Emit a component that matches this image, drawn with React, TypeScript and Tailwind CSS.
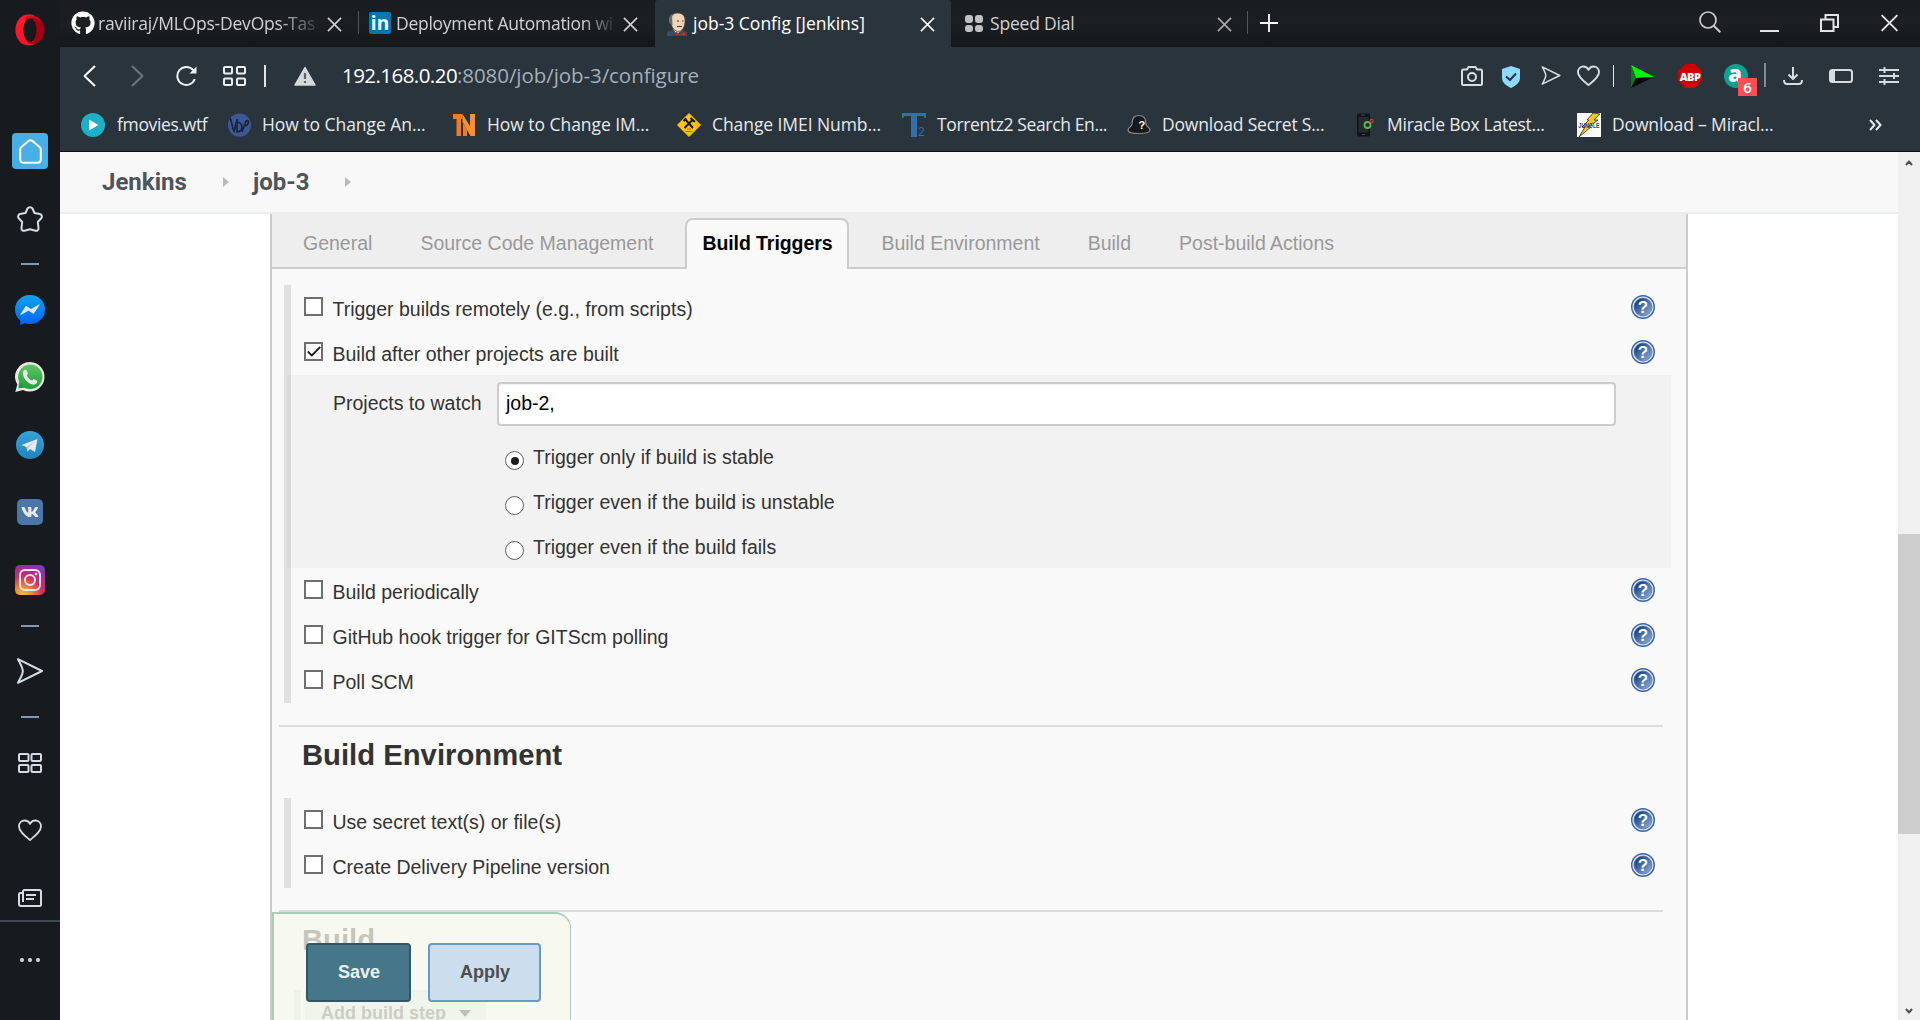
import type { ReactNode } from 'react';
import { FaGithub, FaVk } from 'react-icons/fa';

type IconProps = { className: string; viewBox: string; children: ReactNode };

function Icon({ className, viewBox, children }: IconProps) {
  return (
    <svg
      className={`block shrink-0 ${className}`}
      viewBox={viewBox}
      fill="none"
      stroke="currentColor"
      strokeWidth="2"
      strokeLinejoin="round"
    >
      {children}
    </svg>
  );
}

const HEART = 'M12 21C7 17 1 12.500 1 7.500C1 4 3.500 1.500 6.700 1.500C9 1.500 11 2.800 12 5C13 2.800 15 1.500 17.300 1.500C20.500 1.500 23 4 23 7.500C23 12.500 17 17 12 21Z';

function Grid({ className }: { className: string }) {
  return (
    <Icon className={className} viewBox="0 0 24 20">
      <rect x="1" y="1" width="9.500" height="7" rx="1" />
      <rect x="13.500" y="1" width="9.500" height="7" rx="1" />
      <rect x="1" y="12" width="9.500" height="7" rx="1" />
      <rect x="13.500" y="12" width="9.500" height="7" rx="1" />
    </Icon>
  );
}

function Send({ className }: { className: string }) {
  return (
    <Icon className={className} viewBox="0 0 26 26">
      <path d="M1 1.200L25 13L1 24.800C3.500 20 5.800 16.500 5.800 13C5.800 9.500 3.500 6 1 1.200Z" />
    </Icon>
  );
}

function Close({ className }: { className: string }) {
  return (
    <Icon className={className} viewBox="0 0 16 16">
      <path d="M1 1L15 15M15 1L1 15" strokeWidth="1.700" />
    </Icon>
  );
}

function Dash({ className }: { className: string }) {
  return <div className={`h-0.5 w-[18px] shrink-0 bg-[#8698a8] ${className}`} />;
}

function Sidebar() {
  return (
    <aside className="flex h-full w-[60px] shrink-0 flex-col items-center bg-[#171b1f] text-[#d3dde3]">
      <svg className="mt-[14px] h-8 w-[30px] shrink-0" viewBox="0 0 30 32">
        <defs>
          <linearGradient id="opera" x1="0" y1="0" x2="0" y2="1">
            <stop offset="0" stopColor="#ff1b2d" />
            <stop offset="1" stopColor="#f01528" />
          </linearGradient>
        </defs>
        <ellipse cx="15" cy="16" rx="14.500" ry="15" fill="#a70014" />
        <path d="M20 2C8 -3 0.500 6 0.500 16S8 35 20 30C12 31 8.500 24 8.500 16S12 2 20 2Z" fill="url(#opera)" />
        <path d="M10 4C15 0 23 2 26 7C20 3 14 3 11 8Z" fill="#d50b20" />
        <ellipse cx="15" cy="16" rx="6.500" ry="11.500" fill="#171b1f" />
      </svg>
      <div className="mt-[87px] flex h-9 w-9 shrink-0 items-center justify-center rounded-[4px] bg-[#46b0e6] text-white">
        <Icon className="h-[25px] w-[23px]" viewBox="0 0 23 25">
          <path d="M1.200 10.500C1.200 9.500 1.500 9 2.200 8.200L9.500 2C10.800 1 12.200 1 13.500 2L20.800 8.200C21.500 9 21.800 9.500 21.800 10.500V20.500C21.800 22.500 20.500 23.800 18.500 23.800H4.500C2.500 23.800 1.200 22.500 1.200 20.500Z" />
        </Icon>
      </div>
      <Icon className="mt-[37px] h-[26px] w-[26px]" viewBox="0 0 26 26">
        <path d="M10.500 2.500C11.500 0.800 14.500 0.800 15.500 2.500L17.500 7L23 8C25 8.600 25.600 11 24 12.500L20.800 16L21.500 22C21.600 24.500 20 25 18.500 24.700L13 23.200L7.500 24.700C6 25 4.400 24.500 4.500 22L5.200 16L2 12.500C0.400 11 1 8.600 3 8L8.500 7Z" />
      </Icon>
      <Dash className="mt-[31px]" />
      <svg className="mt-[30px] h-[30px] w-[30px] shrink-0" viewBox="0 0 30 30">
        <defs>
          <linearGradient id="messenger" x1="0" y1="0" x2="0" y2="1">
            <stop offset="0" stopColor="#0aa5ef" />
            <stop offset="1" stopColor="#0663f2" />
          </linearGradient>
        </defs>
        <path d="M15 0C23.500 0 30 6.200 30 14.500S23.500 29 15 29C13 29 11.500 28.700 10 28L5.300 30V25.500C2 23 0 19 0 14.500C0 6.200 6.500 0 15 0Z" fill="url(#messenger)" />
        <path d="M5.800 19.500L11 11.200L16 14.500L24.200 9.800L18.500 18.500L13.500 15.200Z" fill="#e9e9e9" stroke="#e9e9e9" strokeWidth="0.800" strokeLinejoin="round" />
      </svg>
      <svg className="mt-[37px] h-[30px] w-[30px] shrink-0" viewBox="0 0 30 30">
        <defs>
          <linearGradient id="whatsapp" x1="0" y1="0" x2="0" y2="1">
            <stop offset="0" stopColor="#5fc467" />
            <stop offset="1" stopColor="#20a038" />
          </linearGradient>
        </defs>
        <path d="M15 0A14.800 14.800 0 1 1 8 28L0.300 30L2.300 22.500A14.800 14.800 0 0 1 15 0Z" fill="#e8e8e8" />
        <circle cx="15.300" cy="14.800" r="12.200" fill="url(#whatsapp)" />
        <path d="M4 20L3.500 26.500L11 25.500Z" fill="#20a038" />
        <path d="M8 11C8 9 9 8 10 7.700C11 7.500 11.500 8 11.800 8.800L12.800 11.300C13 12 12.300 12.800 11.700 13.500C13 16 14.500 17.500 17 18.600C17.800 17.600 18.400 16.900 19.200 17.200L21.800 18.500C22.500 18.900 22.300 20 22 20.700C21 22.500 18.500 22.800 16.500 22.200C12 20.700 8 16 8 11Z" fill="#e8e8e8" />
      </svg>
      <svg className="mt-[39px] h-7 w-7 shrink-0" viewBox="0 0 28 28">
        <defs>
          <linearGradient id="telegram" x1="0" y1="0" x2="0" y2="1">
            <stop offset="0" stopColor="#38a3d5" />
            <stop offset="1" stopColor="#1d84be" />
          </linearGradient>
        </defs>
        <circle cx="14" cy="14" r="14" fill="url(#telegram)" />
        <path d="M5.500 14L21.500 8L19 21L14 18L11.500 20.500L10.500 16Z" fill="#e6eaed" />
        <path d="M10.500 16L18.500 10.500L12.500 16.800L11.500 20.500Z" fill="#b9cbd8" />
      </svg>
      <div className="mt-10 flex h-[26px] w-[26px] shrink-0 items-center justify-center rounded-[5px] bg-[#4b76a8] text-[#e6e9ec]">
        <FaVk className="h-5 w-[18px]" />
      </div>
      <div className="mt-10 flex h-[30px] w-[30px] shrink-0 items-center justify-center rounded-[5px] bg-[radial-gradient(circle_at_25%_105%,#f3c25f_0%,#ee8a35_25%,#cf2f63_52%,#9f2e9c_75%,#5a49c0_100%)] text-[#f0e6ec]">
        <Icon className="h-[22px] w-[22px]" viewBox="0 0 22 22">
          <rect x="1" y="1" width="20" height="20" rx="5" />
          <circle cx="11" cy="11" r="5" />
          <circle cx="17" cy="5" r="1.300" fill="currentColor" stroke="none" />
        </Icon>
      </div>
      <Dash className="mt-[30px]" />
      <Send className="mt-[31px] h-[26px] w-[26px]" />
      <Dash className="mt-8" />
      <Grid className="mt-[35px] h-5 w-6" />
      <Icon className="mt-[46px] h-[22px] w-6" viewBox="0 0 24 22">
        <path d={HEART} strokeWidth="1.800" />
      </Icon>
      <Icon className="mt-12 h-[18px] w-6" viewBox="0 0 24 18">
        <path d="M5 13V2.500C5 1.500 5.500 1 6.500 1H21.500C22.500 1 23 1.500 23 2.500V15.500C23 16.500 22.500 17 21.500 17H3C1.800 17 1 16.200 1 15V5.500C1 4.500 1.500 4 2.500 4H4M8 6H18M8 10H16" />
      </Icon>
      <div className="mt-[13px] h-0.5 w-full shrink-0 bg-[#3f4951]" />
      <div className="mt-9 flex gap-1">
        <span className="h-1 w-1 rounded-full bg-[#d3dde3]" />
        <span className="h-1 w-1 rounded-full bg-[#d3dde3]" />
        <span className="h-1 w-1 rounded-full bg-[#d3dde3]" />
      </div>
    </aside>
  );
}

function JenkinsFace() {
  return (
    <svg className="h-6 w-[21px] shrink-0" viewBox="0 0 21 24">
      <path d="M0 24V20L6 18H14L20 20V24Z" fill="#335061" />
      <path d="M6 17L10 22L15 18Z" fill="#f0efe9" />
      <path d="M4 11C3 4 6 1 10.500 1C16 1 18.500 4.500 18 10C17.800 15 15 19.500 11.500 19.500C8 19.500 5 16.500 4 11Z" fill="#efd3b5" stroke="#55423a" strokeWidth="0.800" />
      <path d="M3 12C0.500 8 2 3 6 1.500C4.500 5 5.500 8 5.500 13Z" fill="#6d6b6d" />
      <path d="M10 9H12M15 9H16.500M10 14.500H15" stroke="#4b3a33" strokeWidth="1.200" />
      <path d="M9 20L13 22L9 24ZM18 20L13 22L18 24Z" fill="#d33833" stroke="#8d1f1f" strokeWidth="0.500" />
    </svg>
  );
}

function TabStrip() {
  return (
    <div className="flex h-[47px] shrink-0 bg-linear-to-b from-[#1a1d20] via-[#1c1f22] to-[#15181b] text-[17.5px] leading-[46px] text-[#cfd1d3]">
      <div className="flex w-[298px] pl-[11px]">
        <FaGithub className="mt-[11px] h-6 w-6 shrink-0 text-white" />
        <span className="ml-[3px] w-[218px] overflow-hidden whitespace-nowrap tracking-[-0.22px] [mask-image:linear-gradient(to_right,black_82%,transparent_104%)]">
          raviiraj/MLOps-DevOps-Tas
        </span>
        <Close className="ml-[11px] mt-[17px] h-[15px] w-[15px]" />
      </div>
      <div className="mt-[11px] h-[23px] w-px bg-[#54575a]" />
      <div className="flex w-[296px] pl-[10px]">
        <span className="mt-3 flex h-[22px] w-[22px] shrink-0 items-center justify-center rounded-[2px] bg-[#0077b5] text-[19px] font-bold leading-none text-white">
          in
        </span>
        <span className="ml-[5px] w-[217px] overflow-hidden whitespace-nowrap tracking-[-0.27px] [mask-image:linear-gradient(to_right,black_86%,transparent_102%)]">
          Deployment Automation wi
        </span>
        <Close className="ml-[10px] mt-[17px] h-[15px] w-[15px]" />
      </div>
      <div className="flex w-[296px] rounded-t-[3px] bg-[#2a343d] pl-[12px] text-white">
        <div className="mt-3">
          <JenkinsFace />
        </div>
        <span className="ml-[5px] w-[227px] whitespace-nowrap">job-3 Config [Jenkins]</span>
        <Close className="mt-[17px] h-[15px] w-[15px]" />
      </div>
      <div className="flex w-[296px] pl-[14px]">
        <div className="mt-[15px] grid h-[17px] w-[18px] shrink-0 grid-cols-2 gap-[2px]">
          <span className="rounded-[3px] bg-[#bfc1c3]" />
          <span className="rounded-[3px] bg-[#bfc1c3]" />
          <span className="rounded-[3px] bg-[#bfc1c3]" />
          <span className="rounded-[3px] bg-[#bfc1c3]" />
        </div>
        <span className="ml-[7px] w-[227px] whitespace-nowrap tracking-[-0.19px]">Speed Dial</span>
        <Close className="mt-[17px] h-[15px] w-[15px] text-[#a9abad]" />
      </div>
      <div className="mt-[11px] h-[23px] w-px bg-[#54575a]" />
      <Icon className="ml-3 mt-[14px] h-[18px] w-[18px] text-white" viewBox="0 0 18 18">
        <path d="M9 0V18M0 9H18" strokeWidth="1.800" />
      </Icon>
      <div className="ml-auto flex pr-[21px] text-[#e3e4e5]">
        <Icon className="mt-[11px] h-[22px] w-[22px] text-[#c9cbcc]" viewBox="0 0 22 22">
          <circle cx="9" cy="9" r="8" strokeWidth="1.700" />
          <path d="M14.500 14.500L21.300 21.300" />
        </Icon>
        <div className="ml-[39px] mt-[30px] h-0.5 w-[19px] bg-[#e3e4e5]" />
        <Icon className="ml-[41px] mt-[14px] h-[18px] w-[19px]" viewBox="0 0 19 18">
          <path d="M1 5.500H13.500V17H1ZM5.500 5V1H18V13H14" strokeLinejoin="miter" />
        </Icon>
        <Close className="ml-[41px] mt-[14px] h-[18px] w-[19px]" />
      </div>
    </div>
  );
}

function AddressBar() {
  return (
    <div className="flex h-[58px] shrink-0 items-center text-[#d6dde2]">
      <Icon className="ml-[23px] h-[22px] w-[13px] text-white" viewBox="0 0 13 22">
        <path d="M12 1L1.500 11L12 21" />
      </Icon>
      <Icon className="ml-[35px] h-[22px] w-[13px] text-[#6e777e]" viewBox="0 0 13 22">
        <path d="M1 1L11.500 11L1 21" />
      </Icon>
      <Icon className="ml-8 h-5 w-[21px] text-[#eceff1]" viewBox="0 0 21 20">
        <path d="M18.800 13A9 9 0 1 1 17.500 4.500" />
        <path d="M20.500 0.500V7.500H13.500Z" fill="currentColor" stroke="none" />
      </Icon>
      <Icon className="ml-[26px] h-5 w-[23px] text-[#eceff1]" viewBox="0 0 23 20">
        <rect x="1" y="1" width="8" height="6.500" rx="1" />
        <rect x="14" y="1" width="8" height="6.500" rx="1" />
        <rect x="1" y="12.500" width="8" height="6.500" rx="1" />
        <rect x="14" y="12.500" width="8" height="6.500" rx="1" />
      </Icon>
      <div className="ml-[18px] h-[22px] w-0.5 bg-[#e0e4e7]" />
      <Icon className="ml-[28px] h-5 w-[22px]" viewBox="0 0 22 20">
        <path d="M11 1.500L21 19H1Z" fill="#d5d9dc" stroke="#d5d9dc" strokeWidth="1.500" />
        <path d="M11 7V13M11 15V17" stroke="#5a636b" strokeWidth="2.200" />
      </Icon>
      <div className="ml-[26px] flex self-start whitespace-nowrap text-[20.5px] leading-[56px]">
        <span className="w-[115px] tracking-[-0.55px] text-white">192.168.0.20</span>
        <span className="tracking-[-0.07px] text-[#a3afb9]">:8080/job/job-3/configure</span>
      </div>
      <div className="ml-auto flex items-center pr-[21px]">
        <Icon className="h-5 w-[22px]" viewBox="0 0 22 20">
          <path d="M1 5C1 4 1.500 3.500 2.500 3.500H6L7.500 1H14.500L16 3.500H19.500C20.500 3.500 21 4 21 5V17.500C21 18.500 20.500 19 19.500 19H2.500C1.500 19 1 18.500 1 17.500Z" />
          <circle cx="11" cy="11" r="4" />
        </Icon>
        <svg className="ml-[19px] mt-0.5 h-[22px] w-[18px]" viewBox="0 0 18 22">
          <path d="M9 0L18 3V12C18 17 13 20 9 22C5 20 0 17 0 12V3Z" fill="#8fd9ff" />
          <path d="M4 10.500L8 14L14 7.500" fill="none" stroke="#2a343d" strokeWidth="2" />
        </svg>
        <Send className="-mt-[2px] ml-[21px] h-[19px] w-5" />
        <Icon className="-mt-[2px] ml-[16px] mr-px h-[21px] w-[23px]" viewBox="0 0 24 22">
          <path d={HEART} />
        </Icon>
        <div className="ml-3 h-[22px] w-px bg-[#e0e4e7]" />
        <svg className="ml-[17px] h-[23px] w-[23px]" viewBox="0 0 23 23">
          <path d="M0 0L23 12L5 13Z" fill="#00f400" />
          <path d="M0 0L5 13L0 23Z" fill="#0a7a12" />
          <path d="M0 23L5 13L23 12Z" fill="#050805" />
        </svg>
        <div className="ml-6 flex h-6 w-6 items-center justify-center bg-[#d00000] text-[11px] font-extrabold leading-none tracking-[-0.6px] text-white [clip-path:polygon(30%_0,70%_0,100%_30%,100%_70%,70%_100%,30%_100%,0_70%,0_30%)]">
          ABP
        </div>
        <div className="relative ml-[22px] flex h-6 w-6 items-center justify-center rounded-full bg-[#0ba294] text-[22px] font-extrabold leading-none text-white">
          <span className="-mt-[7px] -ml-0.5">a</span>
          <span className="absolute left-[14px] top-[14px] flex h-[18px] w-[19px] items-center justify-center bg-[#ff4f55] text-[15px] font-semibold leading-none">
            6
          </span>
        </div>
        <div className="-mt-[2px] ml-[16px] h-6 w-0.5 bg-[#858b90]" />
        <Icon className="ml-[17px] h-[18px] w-5" viewBox="0 0 20 18">
          <path d="M10 0V11.500M5.500 7.500L10 12L14.500 7.500M1 13C1 16 2 17 4 17H16C18 17 19 16 19 13" />
        </Icon>
        <Icon className="ml-[26px] h-[14px] w-6" viewBox="0 0 24 14">
          <rect x="1" y="1" width="22" height="12" rx="2.500" />
          <path d="M1.500 2H6V12H1.500Z" fill="currentColor" stroke="none" />
        </Icon>
        <Icon className="ml-[26px] h-[18px] w-5" viewBox="0 0 20 18">
          <path d="M0 3H20M0 9H20M0 15H20M5.500 0V6M15 6V12M5.500 12V18" />
        </Icon>
      </div>
    </div>
  );
}

function Bookmark({ icon, label, className }: { icon: ReactNode; label: string; className: string }) {
  return (
    <div className="flex w-[225px] shrink-0 items-center">
      <div className="flex w-[34px] shrink-0">{icon}</div>
      <span className={`-mt-0.5 whitespace-nowrap ${className}`}>{label}</span>
    </div>
  );
}

function BookmarksBar() {
  return (
    <div className="flex h-10 shrink-0 items-center pl-[21px] text-[17.5px] text-[#e6e9eb]">
      <div className="flex w-[147px] shrink-0 items-center">
        <svg className="mr-3 h-6 w-6" viewBox="0 0 24 24">
          <circle cx="12" cy="12" r="12" fill="#1cb0c8" />
          <path d="M8 6.500L17.500 12L8 17.500Z" fill="#fff" />
        </svg>
        <span className="-mt-0.5 tracking-[-0.35px]">fmovies.wtf</span>
      </div>
      <Bookmark
        label="How to Change An..."
        className="tracking-[-0.05px]"
        icon={
          <svg className="h-6 w-6" viewBox="0 0 24 24">
            <circle cx="11.500" cy="12" r="11.500" fill="#3b5998" />
            <path d="M2 5C4 9 4 14 6 18C8 14 7 10 9 8M9 6V19C15 19 16 10 9 9M14 19L18 8C22 6 21 12 17 13" fill="none" stroke="#1d2436" strokeWidth="1.700" />
          </svg>
        }
      />
      <Bookmark
        label="How to Change IM..."
        className="tracking-[-0.05px]"
        icon={
          <svg className="h-6 w-6" viewBox="0 0 24 24">
            <path d="M0 1H9.500V6H8V23H3.500V6H0Z" fill="#ef7d1c" />
            <path d="M9.500 1L17 13V1H22V23H17.500L9.500 9Z" fill="#f78f35" />
            <path d="M10 10L14 16.500V23H10Z" fill="#ef7d1c" />
          </svg>
        }
      />
      <Bookmark
        label="Change IMEI Numb..."
        className="tracking-[-0.08px]"
        icon={
          <svg className="-ml-px h-6 w-6" viewBox="0 0 24 24">
            <path d="M12 0.500L23.500 12L12 23.500L0.500 12Z" fill="#ffc20e" stroke="#ffc20e" strokeLinejoin="round" />
            <path d="M7.500 5.500L16 15M16 6.500L7.500 15M13.500 5L18 9M6.500 8L9.500 5.500" stroke="#161616" strokeWidth="2" />
            <path d="M10 16H14M8.500 18.500H15.500" stroke="#e8561f" strokeWidth="1.200" />
          </svg>
        }
      />
      <Bookmark
        label="Torrentz2 Search En..."
        className="tracking-[-0.37px]"
        icon={
          <svg className="-ml-px h-6 w-6" viewBox="0 0 24 24">
            <path d="M0 0H24V5H22.500L21.500 3H15V24H9V3H2.500L1.500 5H0Z" fill="#336fae" />
            <text x="16" y="23" fontSize="12" fontFamily="Liberation Sans" fill="#336fae">2</text>
          </svg>
        }
      />
      <Bookmark
        label="Download Secret S..."
        className="tracking-[-0.2px]"
        icon={
          <svg className="-ml-px h-6 w-6" viewBox="0 0 24 24">
            <path d="M1 17C1 14 5 14 5 11C5 5 7 2.500 12 2.500S19 5 19 11C19 14 23 14 23 17S18 20.500 12 20.500S1 20 1 17Z" fill="#17181a" stroke="#84888b" strokeWidth="1.200" />
            <text x="11.500" y="16" fontSize="11" fontWeight="700" fontFamily="Liberation Sans" fill="#fff">?</text>
          </svg>
        }
      />
      <Bookmark
        label="Miracle Box Latest..."
        className="tracking-[-0.26px]"
        icon={
          <svg className="h-6 w-6" viewBox="0 0 24 24">
            <rect x="4" y="0.500" width="13" height="23" rx="2" fill="#111417" />
            <rect x="5.500" y="4" width="10" height="15.500" fill="#222b31" />
            <circle cx="14.500" cy="12" r="3" fill="none" stroke="#62b84a" strokeWidth="1.800" />
            <circle cx="18.500" cy="8" r="1.600" fill="none" stroke="#c63a3a" strokeWidth="1.200" />
            <path d="M8 2H12M9 21.500H12" stroke="#444c52" />
          </svg>
        }
      />
      <Bookmark
        label="Download – Miracl..."
        className="tracking-[-0.15px]"
        icon={
          <svg className="-ml-px h-6 w-6" viewBox="0 0 24 24">
            <rect width="24" height="24" fill="#fbfbf8" />
            <path d="M16 0L23 1L17 7H21L11 14H14L2 24L8 14H5L12 7H10Z" fill="#f5c328" stroke="#2a2a2a" strokeWidth="0.800" />
            <text x="1.500" y="14.500" fontSize="8" fontWeight="700" textLength="21" lengthAdjust="spacingAndGlyphs" fontFamily="Liberation Sans" fill="#333a8e">JUNGLE</text>
          </svg>
        }
      />
      <Icon className="ml-[66px] h-3 w-[13px]" viewBox="0 0 13 12">
        <path d="M1 1L5.500 6L1 11M7 1L11.500 6L7 11" />
      </Icon>
    </div>
  );
}

function Help() {
  return (
    <svg className="mr-4 mt-[10px] h-6 w-6 shrink-0" viewBox="0 0 24 24">
      <defs>
        <linearGradient id="help" x1="0" y1="0" x2="1" y2="1">
          <stop offset="0.200" stopColor="#1f4788" />
          <stop offset="0.900" stopColor="#86a9d6" />
        </linearGradient>
      </defs>
      <circle cx="12" cy="12" r="11.300" fill="#dce6f3" stroke="#3c64a0" strokeWidth="1.400" />
      <circle cx="12" cy="12" r="9" fill="url(#help)" stroke="#4a70a9" strokeWidth="0.700" />
      <text x="12" y="18" textAnchor="middle" fontSize="17" fontWeight="700" fontFamily="Liberation Sans" fill="#fff">?</text>
    </svg>
  );
}

function CheckRow({ label, checked }: { label: string; checked?: boolean }) {
  return (
    <div className="flex h-[45px] pl-[13px]">
      <span className="mt-3 flex h-[19px] w-[19px] shrink-0 items-center justify-center border-2 border-[#6f6f6f] bg-white text-[#222]">
        {checked && (
          <Icon className="h-[11px] w-[14px]" viewBox="0 0 14 11">
            <path d="M0.800 5.500L4.800 9.500L13.200 1" strokeWidth="1.800" />
          </Icon>
        )}
      </span>
      <span className="ml-[9.5px] grow whitespace-nowrap leading-[49px]">{label}</span>
      <Help />
    </div>
  );
}

function RadioRow({ label, checked }: { label: string; checked?: boolean }) {
  return (
    <div className="flex h-[45px] pl-[218px]">
      <span className="mt-4 flex h-[19px] w-[19px] items-center justify-center rounded-full border-[1.5px] border-[#5f5f5f] bg-white">
        {checked && <span className="h-2 w-2 rounded-full bg-[#1c1c1c]" />}
      </span>
      <span className="ml-[9px] leading-[45px]">{label}</span>
    </div>
  );
}

function Section({ children }: { children: ReactNode }) {
  return <div className="ml-3 mr-[15px] border-l-[7px] border-[#e0e0e0]">{children}</div>;
}

function Heading({ children }: { children: ReactNode }) {
  return (
    <h2 className="ml-[7px] mr-[23px] h-[73px] border-t-2 border-[#dcdcdc] pl-[23px] text-[29.25px] font-bold leading-[56px]">
      {children}
    </h2>
  );
}

function ConfigTabs() {
  return (
    <div className="flex h-[55px] gap-4 border-b-2 border-[#cccccc] bg-[#eeeeee] pl-[15px] leading-[58px] text-[#999999]">
      <span className="px-4">General</span>
      <span className="px-4">Source Code Management</span>
      <span className="-mb-0.5 mt-1 h-[51px] w-[164px] shrink-0 rounded-t-lg border-2 border-b-0 border-[#cccccc] bg-[#f9f9f9] text-center font-bold leading-[46px] tracking-[-0.08px] text-black">
        Build Triggers
      </span>
      <span className="px-4">Build Environment</span>
      <span className="px-4">Build</span>
      <span className="px-4">Post-build Actions</span>
    </div>
  );
}

function SaveBar() {
  return (
    <div className="absolute left-0 top-[698px] flex h-[110px] w-[299px] gap-[17px] rounded-tr-[16px] border-2 border-b-0 border-r-[1px] border-[#a8cdbb] bg-[rgba(246,248,236,0.75)] pl-8 pt-[29px] text-[18px] font-bold">
      <button className="h-[59px] w-[105px] rounded-[4px] border-2 border-[#335566] bg-[#457788] pl-px text-[#eeeeee]">Save</button>
      <button className="h-[59px] w-[113px] rounded-[4px] border-2 border-[#6699cc] bg-[#ccddee] pl-px text-[#4d4d4d]">Apply</button>
    </div>
  );
}

function JenkinsPage() {
  return (
    <main className="flex min-w-0 grow flex-col bg-white">
      <nav className="flex h-[62px] shrink-0 items-center border-b-2 border-[#e9eef2] bg-[#f8f8f8] pl-[42px] font-[Roboto] text-[24px] font-bold text-[#4d545d]">
        <span className="w-[121px]">Jenkins</span>
        <Crumb />
        <span className="ml-6 w-[92px]">job-3</span>
        <Crumb />
      </nav>
      <div className="relative mx-[210px] grow overflow-hidden border-x-2 border-[#cccccc] bg-[#f9f9f9] font-['Liberation_Sans',Arial,sans-serif] text-[19.5px] text-[#333333]">
        <ConfigTabs />
        <div className="h-4" />
        <Section>
          <CheckRow label="Trigger builds remotely (e.g., from scripts)" />
          <CheckRow label="Build after other projects are built" checked />
          <div className="-ml-1 h-[193px] overflow-hidden bg-[rgba(0,0,0,0.028)]">
            <div className="flex pt-[7px]">
              <span className="h-11 w-[210px] pl-[46px] leading-[42px]">Projects to watch</span>
              <div className="h-11 w-[1119px] rounded-[4px] border-2 border-[#cccccc] bg-white pl-[7px] leading-[39px] text-black shadow-[inset_0_1px_2px_rgba(0,0,0,0.07)]">
                job-2,
              </div>
            </div>
            <div className="mt-[9px]">
              <RadioRow label="Trigger only if build is stable" checked />
              <RadioRow label="Trigger even if the build is unstable" />
              <RadioRow label="Trigger even if the build fails" />
            </div>
          </div>
          <CheckRow label="Build periodically" />
          <CheckRow label="GitHub hook trigger for GITScm polling" />
          <CheckRow label="Poll SCM" />
        </Section>
        <div className="h-[22px]" />
        <Heading>Build Environment</Heading>
        <Section>
          <CheckRow label="Use secret text(s) or file(s)" />
          <CheckRow label="Create Delivery Pipeline version" />
        </Section>
        <div className="h-[22px]" />
        <Heading>Build</Heading>
        <div className="ml-[22px] mt-[7px] flex border-l-[7px] border-[#d8dfdb] pl-1">
          <div className="flex h-12 w-[181px] items-center border-2 border-[#dddddd] bg-[#e2e8e4] pl-[14px] text-[18px] font-bold text-[#4d4d4d]">
            <span className="-mt-0.5">Add build step</span>
            <span className="-mt-0.5 ml-[13px] border-x-[6px] border-t-[7px] border-x-transparent border-t-[#222]" />
          </div>
        </div>
        <SaveBar />
      </div>
    </main>
  );
}

function Crumb() {
  return <span className="-mt-px h-0 w-0 border-y-[5.5px] border-l-[6px] border-y-transparent border-l-[#b9b9b9]" />;
}

function Scrollbar() {
  return (
    <div className="flex w-[22px] shrink-0 flex-col items-center bg-[#f0f0f0] text-[#505050]">
      <Icon className="mt-2 h-1.5 w-2" viewBox="0 0 8 6">
        <path d="M1 5L4 1.500L7 5" />
      </Icon>
      <div className="mt-[368px] h-[300px] w-full bg-[#cdcdcd]" />
      <Icon className="mb-1.5 mt-auto h-1.5 w-2" viewBox="0 0 8 6">
        <path d="M1 1L4 4.500L7 1" />
      </Icon>
    </div>
  );
}

export default function App() {
  return (
    <div className="flex h-[1020px] w-[1920px] overflow-hidden bg-[#171b1f] font-['Open_Sans','Noto_Sans',sans-serif]">
      <Sidebar />
      <div className="flex min-w-0 grow flex-col">
        <header className="flex h-[152px] shrink-0 flex-col border-b border-[#0e1215] bg-[#2a343d]">
          <TabStrip />
          <AddressBar />
          <BookmarksBar />
        </header>
        <div className="flex min-h-0 grow">
          <JenkinsPage />
          <Scrollbar />
        </div>
      </div>
    </div>
  );
}
